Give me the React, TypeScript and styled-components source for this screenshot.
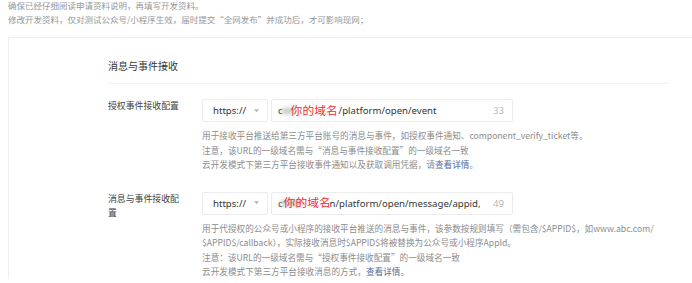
import React from "react";
import styled, { createGlobalStyle } from "styled-components";

const GlobalStyle = createGlobalStyle`
  html, body {
    margin: 0;
    padding: 0;
    background: #fff;
  }
  body {
    font-family: "Noto Sans", "Noto Sans CJK SC", sans-serif;
  }
`;

const Page = styled.div`
  width: 692px;
  height: 283px;
  overflow: hidden;
  padding-left: 8px;
  box-sizing: border-box;
`;

const Notice = styled.div`
  margin-top: -2px;
  font-family: "Noto Sans CJK SC", sans-serif;
  font-size: 8.5px;
  line-height: 14px;
  color: #979797;
  white-space: nowrap;
`;

const Card = styled.div`
  margin-top: 11px;
  width: 760px;
  border-top: 1px solid #efefef;
  border-left: 1px solid #efefef;
  padding-left: 99px;
  box-sizing: border-box;
`;

const Section = styled.div`
  width: 561px;
`;

const SectionTitle = styled.div`
  font-family: "Noto Sans CJK SC", sans-serif;
  font-size: 10px;
  line-height: 20px;
  color: #353535;
  padding-top: 18px;
  padding-bottom: 7px;
  border-bottom: 1px solid #efefef;
`;

const Row = styled.div<{ $first?: boolean }>`
  display: flex;
  margin-top: ${(p) => (p.$first ? 15 : 20)}px;
`;

const Label = styled.div`
  width: 73px;
  margin-right: 21px;
  font-family: "Noto Sans CJK SC", sans-serif;
  font-size: 8.9px;
  line-height: 14px;
  color: #3f3f3f;
`;

const Control = styled.div`
  display: flex;
  flex-direction: column;
`;

const InputGroup = styled.div`
  display: flex;
  gap: 3px;
  height: 23px;
`;

const Box = styled.div`
  box-sizing: border-box;
  height: 23px;
  border: 1px solid #ececec;
  border-radius: 2px;
  background: #fff;
  display: flex;
  align-items: center;
  font-size: 9.6px;
  color: #353535;
`;

const Select = styled(Box)`
  width: 66px;
  padding: 0 8px 0 10px;
  justify-content: space-between;
`;

const Caret = styled.svg`
  width: 5px;
  height: 4px;
`;

const Input = styled(Box)`
  width: 242px;
  padding: 0 8px 0 6px;
  justify-content: space-between;
`;

const Value = styled.div`
  display: flex;
  align-items: center;
  white-space: nowrap;
`;

const Mask = styled.span`
  position: relative;
  display: inline-block;
  height: 14px;
`;

const Blur = styled.span`
  position: absolute;
  top: 4px;
  height: 6px;
  background: #c8c8c8;
  filter: blur(2px);
`;

const Red = styled.span`
  position: absolute;
  top: -4px;
  font-family: "Noto Sans CJK SC", sans-serif;
  font-size: 11.8px;
  line-height: 20px;
  color: #ef2f2f;
  white-space: nowrap;
`;

const Count = styled.span`
  color: #b8b8b8;
  font-size: 9.6px;
`;

const Desc = styled.div`
  margin-top: 6px;
  font-family: "Noto Sans CJK SC", sans-serif;
  font-size: 8.65px;
  line-height: 14.5px;
  color: #8c8c8c;
  white-space: nowrap;
`;

const Link = styled.span`
  color: #576b95;
`;

type Field = {
  label: string;
  value: string;
  count: number;
  maskWidth: number;
  redLeft: number;
  blurLeft: number;
  blurWidth: number;
  lines: React.ReactNode[];
};

const fields: Field[] = [
  {
    label: "授权事件接收配置",
    value: "/platform/open/event",
    count: 33,
    maskWidth: 56,
    redLeft: 8,
    blurLeft: -1,
    blurWidth: 12,
    lines: [
      "用于接收平台推送给第三方平台账号的消息与事件，如授权事件通知、component_verify_ticket等。",
      "注意，该URL的一级域名需与“消息与事件接收配置”的一级域名一致",
      <>
        云开发模式下第三方平台接收事件通知以及获取调用凭据，请<Link>查看详情</Link>。
      </>,
    ],
  },
  {
    label: "消息与事件接收配置",
    value: "n/platform/open/message/appid,",
    count: 49,
    maskWidth: 47,
    redLeft: 1,
    blurLeft: -2,
    blurWidth: 22,
    lines: [
      "用于代授权的公众号或小程序的接收平台推送的消息与事件，该参数按规则填写（需包含/$APPID$，如www.abc.com/",
      "$APPID$/callback），实际接收消息时$APPID$将被替换为公众号或小程序AppId。",
      "注意：该URL的一级域名需与“授权事件接收配置”的一级域名一致",
      <>
        云开发模式下第三方平台接收消息的方式，<Link>查看详情</Link>。
      </>,
    ],
  },
];

export default function App() {
  return (
    <Page>
      <GlobalStyle />
      <Notice>
        <div>确保已经仔细阅读申请资料说明，再填写开发资料。</div>
        <div>修改开发资料，仅对测试公众号/小程序生效，届时提交“全网发布”并成功后，才可影响现网；</div>
      </Notice>
      <Card>
        <Section>
          <SectionTitle>消息与事件接收</SectionTitle>
          {fields.map((f, i) => (
            <Row key={i} $first={i === 0}>
              <Label>{f.label}</Label>
              <Control>
                <InputGroup>
                  <Select>
                    <span>https://</span>
                    <Caret viewBox="0 0 6 4">
                      <path d="M0 0 L6 0 L3 3.5 Z" fill="#b5b5b5" />
                    </Caret>
                  </Select>
                  <Input>
                    <Value>
                      <span>c</span>
                      <Mask style={{ width: f.maskWidth }}>
                        <Blur style={{ left: f.blurLeft, width: f.blurWidth }} />
                        <Red style={{ left: f.redLeft }}>你的域名</Red>
                      </Mask>
                      <span>{f.value}</span>
                    </Value>
                    <Count>{f.count}</Count>
                  </Input>
                </InputGroup>
                <Desc>
                  {f.lines.map((l, j) => (
                    <div key={j}>{l}</div>
                  ))}
                </Desc>
              </Control>
            </Row>
          ))}
        </Section>
      </Card>
    </Page>
  );
}
